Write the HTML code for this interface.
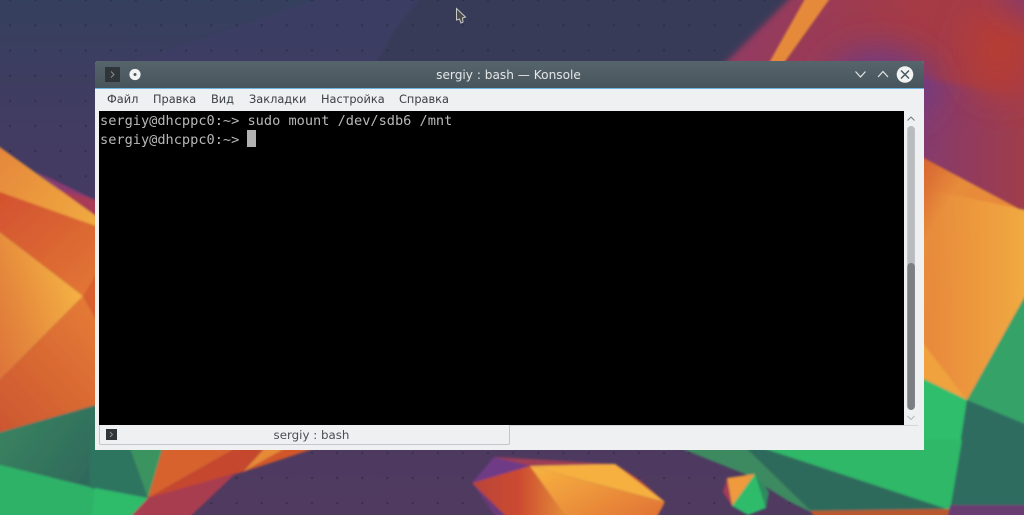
<!DOCTYPE html>
<html><head><meta charset="utf-8"><style>
html,body{margin:0;padding:0;width:1024px;height:515px;overflow:hidden;background:#3d3a60}
#bg{position:absolute;left:0;top:0}
.abs{position:absolute}
#win{left:95px;top:61px;width:829px;height:389px;background:#eff0f1;border-radius:3px 3px 0 0;overflow:hidden;filter:blur(.25px)}
#tb{left:0;top:0;width:829px;height:27px;background:linear-gradient(#56646b,#48545b)}
#line{left:0;top:27px;width:829px;height:1px;background:#6fb3e0}
#title{left:0;top:6.5px;width:827px;text-align:center;color:#e4e7e8;font:12.15px/15px "DejaVu Sans","Liberation Sans",sans-serif;}
.m{position:absolute;top:31px;color:#3a4044;font:11.35px/15px "DejaVu Sans","Liberation Sans",sans-serif;white-space:pre}
#term{left:4px;top:50px;width:805px;height:314px;background:#000}
.t{position:absolute;left:1px;color:#b8b8b8;font:13.62px/19px "DejaVu Sans Mono","Liberation Mono",monospace;white-space:pre}
#cur{width:9px;height:17px;background:#b2b2b2;position:absolute}
#tab{left:4px;top:364px;width:409px;height:19px;background:#eff0f1;border:1px solid #c4c7c9;border-top:none;border-radius:0 0 2px 2px;box-sizing:content-box}
#tabt{left:0;top:3px;width:423px;text-align:center;color:#4a4f53;font:11.85px/15px "DejaVu Sans","Liberation Sans",sans-serif;}
</style></head><body>
<svg id="bg" width="1024" height="515" viewBox="0 0 1024 515" xmlns="http://www.w3.org/2000/svg">
<defs>
<linearGradient id="base" x1="0" y1="0" x2="0" y2="1"><stop offset="0" stop-color="#35405e"/><stop offset=".25" stop-color="#423b62"/><stop offset="1" stop-color="#503a60"/></linearGradient>
<linearGradient id="tr" x1="0" y1="0" x2="1" y2=".3"><stop offset="0" stop-color="#8c3a6a"/><stop offset=".6" stop-color="#a63b44"/><stop offset="1" stop-color="#a33b4c"/></linearGradient>
<linearGradient id="rp" x1="0" y1="0" x2="1" y2="0"><stop offset="0" stop-color="#7a3a7c"/><stop offset="1" stop-color="#a63c44"/></linearGradient>
<linearGradient id="or1" x1="0" y1="0" x2="1" y2=".6"><stop offset="0" stop-color="#e2803a"/><stop offset="1" stop-color="#f0a840"/></linearGradient>
<linearGradient id="orR" x1="0" y1="0" x2=".45" y2=".5"><stop offset="0" stop-color="#cf5630"/><stop offset=".3" stop-color="#dc7034"/><stop offset=".55" stop-color="#e78c3b"/><stop offset="1" stop-color="#e88a3b"/></linearGradient>
<linearGradient id="orH" gradientUnits="userSpaceOnUse" x1="930" y1="0" x2="1030" y2="0"><stop offset="0" stop-color="#f0a840" stop-opacity="0"/><stop offset="1" stop-color="#f2ac42" stop-opacity="1"/></linearGradient>
<linearGradient id="or2" x1="0" y1="1" x2="1" y2=".4"><stop offset="0" stop-color="#d9653a"/><stop offset=".5" stop-color="#e58a3c"/><stop offset="1" stop-color="#f6b445"/></linearGradient>
<linearGradient id="or3" x1="0" y1="1" x2="1" y2="0"><stop offset="0" stop-color="#c9522f"/><stop offset="1" stop-color="#e77f37"/></linearGradient>
<linearGradient id="re" x1="0" y1="0" x2="1" y2="1"><stop offset="0" stop-color="#d04c2e"/><stop offset="1" stop-color="#e47a36"/></linearGradient>
<linearGradient id="gr" x1="0" y1="0" x2="1" y2=".5"><stop offset="0" stop-color="#3d8a60"/><stop offset="1" stop-color="#2f6a5c"/></linearGradient>
<linearGradient id="gem" x1="0" y1="0" x2="1" y2="1"><stop offset="0" stop-color="#f8b440"/><stop offset="1" stop-color="#dd6a34"/></linearGradient>
<linearGradient id="gem2" x1="0" y1="0" x2="1" y2="0"><stop offset="0" stop-color="#b8433a"/><stop offset=".45" stop-color="#cc4a30"/><stop offset="1" stop-color="#ea9a3c"/></linearGradient>
<pattern id="dots" x="8.6" y="-1.4" width="25.15" height="25.15" patternUnits="userSpaceOnUse"><rect x="0.6" y="0.6" width="2" height="2" fill="#1f2430" opacity=".5"/></pattern>
<filter id="b1" x="-5%" y="-5%" width="110%" height="110%"><feGaussianBlur stdDeviation="1.1"/></filter>
<filter id="b2" x="-5%" y="-5%" width="110%" height="110%"><feGaussianBlur stdDeviation="3"/></filter>
<filter id="b4" x="-60%" y="-60%" width="220%" height="220%"><feGaussianBlur stdDeviation="18"/></filter>
</defs>
<rect width="1024" height="515" fill="url(#base)"/>
<polygon points="330,-5 424,-5 395,30 372,70 95,70 200,40" fill="#3f3c66" opacity=".55" filter="url(#b1)"/>
<polygon points="424,-5 808,-5 728,70 372,70 395,30" fill="#373a58" filter="url(#b1)"/>
<rect width="1024" height="515" fill="url(#dots)"/>
<!-- top right -->
<g filter="url(#b2)">
<polygon points="808,-20 1044,-20 1044,225 924,165 880,130 718,70" fill="url(#tr)"/>
<polygon points="880,70 1044,100 1044,225 924,165 880,150" fill="url(#rp)"/>
</g>
<ellipse cx="1000" cy="50" rx="34" ry="46" fill="#b63c34" filter="url(#b4)"/>
<ellipse cx="1035" cy="-8" rx="34" ry="20" fill="#7e3a78" filter="url(#b4)"/>
<ellipse cx="880" cy="85" rx="55" ry="36" fill="#6c3a86" filter="url(#b4)"/>
<polygon points="806,-3 831,-3 779,70 765,70" fill="#e58a3a" filter="url(#b1)"/>
<g filter="url(#b1)">
<!-- right side -->
<polygon points="905,148 1044,222 1044,262 967,400 905,345" fill="url(#orR)"/>
<polygon points="930,190 1044,214 1044,262 967,400 930,352" fill="url(#orH)"/>
<polygon points="905,320 967,400 905,370" fill="#efa23e"/>
<polygon points="905,370 967,400 950,510 905,510" fill="#2fbe6c"/>
<polygon points="967,400 1044,432 1044,510 950,510" fill="#2f6c60"/>
<polygon points="967,400 1044,262 1044,432" fill="#35a268"/>
<!-- left side -->
<polygon points="37,172 110,207 110,225 60,190" fill="#8c3a72"/>
<polygon points="110,204 110,225 72,208 60,190" fill="#a83b55"/>
<polygon points="-20,133 110,226 110,236 -20,185" fill="url(#or1)"/>
<polygon points="-20,185 110,231 110,285 83,296 -20,217" fill="url(#re)"/>
<polygon points="-20,217 83,296 -20,400" fill="url(#or2)"/>
<polygon points="-20,400 83,296 110,345 110,401 -20,438" fill="url(#or3)"/>
<polygon points="83,296 110,250 110,345" fill="#d9602f"/>
<polygon points="-20,438 110,401 110,493 -20,460" fill="url(#gr)"/>
<polygon points="-20,460 110,492 132,530 -20,530" fill="#2eb268"/>
<!-- bottom left -->
<polygon points="90,440 127,440 148,498 90,488" fill="#2f7460"/>
<polygon points="127,440 165,440 148,498" fill="#3b9460"/>
<polygon points="95,488 148,498 118,530 90,530" fill="#2dbb6a"/>
<polygon points="165,440 250,440 148,498" fill="#d8622f"/>
<polygon points="250,440 272,440 243,472 148,498" fill="#c4462e"/>
<polygon points="148,498 236,473 176,530 118,530" fill="#a83c50"/>
<polygon points="272,440 300,440 243,472" fill="#e68a38"/>
<polygon points="300,440 340,440 243,472" fill="#d2562c"/>
<!-- centre gem -->
<polygon points="472,483 494,457 530,466" fill="#6f3a86"/>
<polygon points="494,457 615,464 530,466" fill="#a03c55"/>
<polygon points="615,464 665,502 640,480" fill="#c04a3a"/>
<polygon points="472,483 530,466 575,530 520,530" fill="url(#gem2)"/>
<polygon points="530,466 615,464 665,502" fill="#f6b040"/>
<polygon points="530,466 665,502 650,530 575,530" fill="url(#gem)"/>
<polygon points="472,483 520,530 505,530" fill="#6a3a78"/>
<!-- green + small gem -->
<polygon points="660,440 738,440 813,513 790,502 745,474" fill="#3c8a60"/>
<polygon points="738,440 962,440 950,510" fill="#2eb868"/>
<polygon points="738,440 950,510 813,513" fill="#2f6a5c"/>
<polygon points="810,511 950,509 950,530 825,530" fill="#b9592f"/>
<polygon points="950,505 1044,505 1044,530 945,530" fill="#6a3e72"/>
<polygon points="727,478 755,474 732,506" fill="#ee9a3e"/>
<polygon points="723,492 727,478 732,506" fill="#a83a55"/>
<polygon points="755,474 766,508 748,515 732,506" fill="#2fbc6a"/>
<polygon points="755,474 769,492 766,508" fill="#2f8a60"/>
</g>
<!-- cursor -->
<path d="M456.5 8.5 L456.5 20 L459.5 19 L461 23 L463 22 L462.5 18 L465.5 17 Z" fill="#4a4a4a" stroke="#c8c8c8" stroke-width="1"/>
</svg>

<div id="win" class="abs">
  <div id="tb" class="abs"></div>
  <div id="line" class="abs"></div>
  <div id="title" class="abs">sergiy : bash — Konsole</div>
  <svg class="abs" style="left:0;top:0" width="829" height="27" xmlns="http://www.w3.org/2000/svg">
    <rect x="10" y="6" width="15" height="15" fill="#2f3538"/>
    <path d="M16 10.5 L19 13.5 L16 16.5" fill="none" stroke="#8b9296" stroke-width="1"/>
    <circle cx="40" cy="13.5" r="5.6" fill="#f2f3f3"/>
    <circle cx="40" cy="13.5" r="1.5" fill="#4c585f"/>
    <path d="M760.5 10.5 L765.5 16 L770.5 10.5" fill="none" stroke="#e4e7e8" stroke-width="1.2"/>
    <path d="M783 16 L788 10.5 L793 16" fill="none" stroke="#e4e7e8" stroke-width="1.2"/>
    <circle cx="810" cy="13.5" r="8.3" fill="#f2f3f3"/>
    <path d="M806 9.5 L814 17.5 M814 9.5 L806 17.5" stroke="#4c585f" stroke-width="1.5"/>
  </svg>
  <div class="m" style="left:12px">Файл</div>
  <div class="m" style="left:58px">Правка</div>
  <div class="m" style="left:116px">Вид</div>
  <div class="m" style="left:154px">Закладки</div>
  <div class="m" style="left:226px">Настройка</div>
  <div class="m" style="left:304px">Справка</div>
  <div id="term" class="abs">
    <div class="t" style="top:1px">sergiy@dhcppc0:~&gt; sudo mount /dev/sdb6 /mnt</div>
    <div class="t" style="top:20px">sergiy@dhcppc0:~&gt;</div>
    <div id="cur" style="top:19px;left:148px"></div>
  </div>
  <svg class="abs" style="left:809px;top:50px" width="20" height="330" xmlns="http://www.w3.org/2000/svg">
    <path d="M3.5 9.5 L7 6 L10.5 9.5" fill="none" stroke="#6f7c80" stroke-width="1"/>
    <rect x="3.3" y="15" width="7.6" height="284" rx="3.7" fill="#b9bbbe"/>
    <rect x="3.3" y="152" width="7.6" height="147" rx="3.7" fill="#7c7e84"/>
    <path d="M3.5 305 L7 308.5 L10.5 305" fill="none" stroke="#b4b7ba" stroke-width="1"/>
  </svg>
  <div class="abs" style="left:414px;top:364px;width:409px;height:1px;background:#d4d6d8"></div>
  <div id="tab" class="abs">
    <div id="tabt" class="abs">sergiy : bash</div>
    <svg class="abs" style="left:6px;top:4px" width="12" height="12" xmlns="http://www.w3.org/2000/svg">
      <rect width="11" height="11" fill="#2f3538"/>
      <path d="M4 3 L6.5 5.5 L4 8" fill="none" stroke="#8b9296" stroke-width="1"/>
    </svg>
  </div>
</div>
</body></html>
